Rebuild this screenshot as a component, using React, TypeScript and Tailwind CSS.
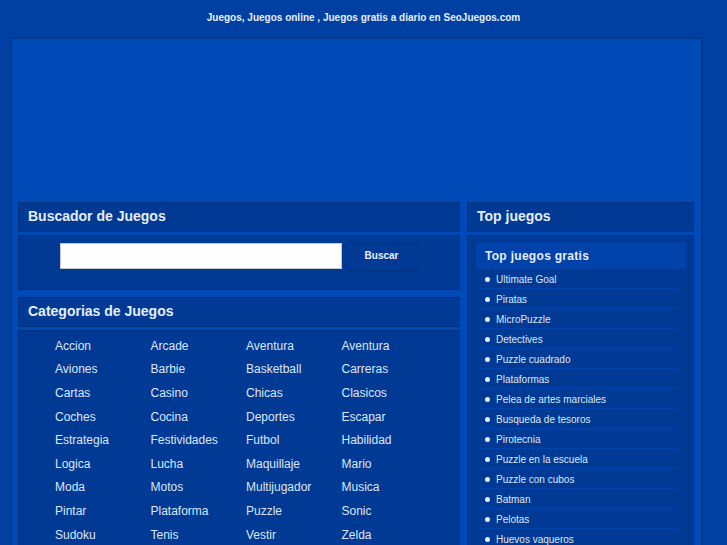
const categorias = [
  'Accion', 'Arcade', 'Aventura', 'Aventura',
  'Aviones', 'Barbie', 'Basketball', 'Carreras',
  'Cartas', 'Casino', 'Chicas', 'Clasicos',
  'Coches', 'Cocina', 'Deportes', 'Escapar',
  'Estrategia', 'Festividades', 'Futbol', 'Habilidad',
  'Logica', 'Lucha', 'Maquillaje', 'Mario',
  'Moda', 'Motos', 'Multijugador', 'Musica',
  'Pintar', 'Plataforma', 'Puzzle', 'Sonic',
  'Sudoku', 'Tenis', 'Vestir', 'Zelda',
];

const topJuegos = [
  'Ultimate Goal',
  'Piratas',
  'MicroPuzzle',
  'Detectives',
  'Puzzle cuadrado',
  'Plataformas',
  'Pelea de artes marciales',
  'Busqueda de tesoros',
  'Pirotecnia',
  'Puzzle en la escuela',
  'Puzzle con cubos',
  'Batman',
  'Pelotas',
  'Huevos vaqueros',
];

function BoxHeader({ title }: { title: string }) {
  return (
    <div className="flex h-[30px] items-center border border-[#00337f] bg-[#003a94] px-[9px] pb-[1px] text-[14px] font-bold text-[#e6edf8]">
      {title}
    </div>
  );
}

export default function App() {
  return (
    <div className="h-[545px] overflow-hidden bg-[#0040a2] font-['Liberation_Sans',Arial,sans-serif]">
      {/* titulo */}
      <div className="flex h-[37px] items-center justify-center pb-[3px] text-[10px] font-bold text-[#e8eef8]">
        Juegos, Juegos online , Juegos gratis a diario en SeoJuegos.com
      </div>

      <div className="ml-[10px] w-[693px] border-2 border-[#003a8f] bg-[#004ab8] pl-[6px] pr-[7px]">
        {/* banner */}
        <div className="h-[163px]" />

        <div className="flex gap-[7px]">
          {/* columna izquierda */}
          <div className="flex w-[442px] flex-col">
            <BoxHeader title="Buscador de Juegos" />
            <div className="mt-[3px] flex h-[55px] justify-center border border-[#00337f] bg-[#003a94] pt-[7px]">
              <div className="flex items-start gap-[3px]">
                <input className="h-[26px] w-[282px] border border-[#c8c8c8] bg-white outline-none" />
                <button className="h-[28px] w-[73px] border border-[#00337f] bg-[#003a94] pb-[3px] text-[10px] font-bold text-[#e6edf8]">
                  Buscar
                </button>
              </div>
            </div>

            <div className="mt-[7px]">
              <BoxHeader title="Categorias de Juegos" />
            </div>
            <div className="mt-[3px] border border-[#00337f] bg-[#003a94] pl-[36px] pt-[3px]">
              <div className="grid grid-cols-[95.5px_95.5px_95.5px_95.5px]">
                {categorias.map((c, i) => (
                  <div key={i} className="flex h-[23.6px] items-center text-[12px] text-[#dde6f5]">
                    {c}
                  </div>
                ))}
              </div>
            </div>
          </div>

          {/* columna derecha */}
          <div className="flex w-[227px] flex-col">
            <BoxHeader title="Top juegos" />
            <div className="mt-[3px] border border-[#00337f] bg-[#003a94] pl-[8px] pr-[7px] pt-[6px]">
              <div className="flex h-[27px] items-center bg-[#0042aa] px-[9px] text-[12px] font-bold tracking-[0.3px] text-[#e6edf8]">
                Top juegos gratis
              </div>
              <ul className="ml-[5px] w-[197px]">
                {topJuegos.map((t) => (
                  <li
                    key={t}
                    className="flex h-[20px] items-center border-b border-[#0044ad] pl-[4px] pt-[1px] text-[10px] text-[#dde6f5]"
                  >
                    <span className="mr-[6px] h-[5px] w-[5px] rounded-full bg-[#e6edf8]" />
                    {t}
                  </li>
                ))}
              </ul>
            </div>
          </div>
        </div>
      </div>
    </div>
  );
}
